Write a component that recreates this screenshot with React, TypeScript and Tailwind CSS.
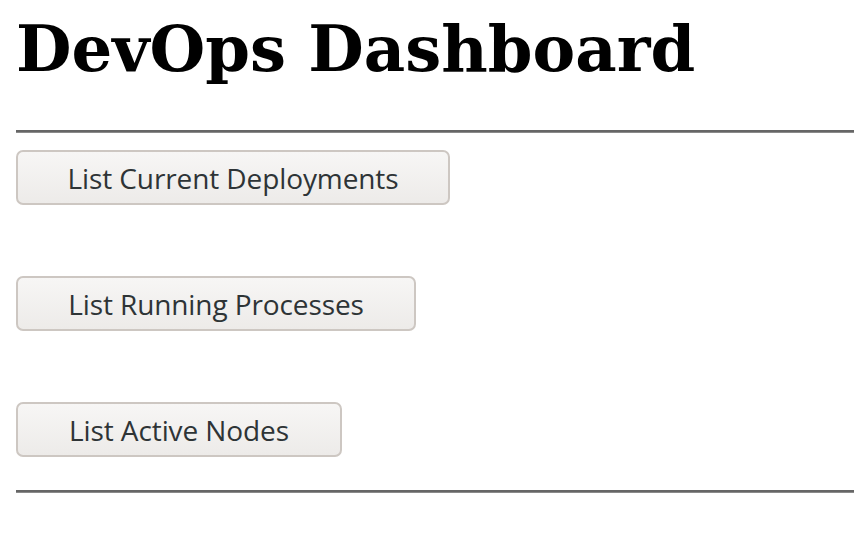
export default function App() {
  const actions = [
    { label: "List Current Deployments", width: "w-[434px]" },
    { label: "List Running Processes", width: "w-[400px]" },
    { label: "List Active Nodes", width: "w-[326px]" },
  ];

  return (
    <main className="min-h-screen bg-white pl-4">
      {/* title */}
      <h1 className="pt-[11px] font-['DejaVu_Serif',serif] text-[64px] font-bold leading-[75px] text-black">
        DevOps Dashboard
      </h1>

      <hr className="mt-[44px] h-[3px] border-0 border-t-2 border-b border-t-[#666666] border-b-[#8a8a8a]" />

      {/* actions */}
      <div className="flex flex-col items-start gap-[71px] pt-[17px]">
        {actions.map((a) => (
          <button
            key={a.label}
            type="button"
            className={`${a.width} h-[55px] rounded-[7px] border-2 border-[#cdc7c2] bg-gradient-to-b from-[#f7f6f5] to-[#edebe9] font-['Open_Sans',sans-serif] text-[28px] tracking-[-0.1px] text-[#2e3436]`}
          >
            {a.label}
          </button>
        ))}
      </div>

      <hr className="mt-[33px] h-[3px] border-0 border-t-2 border-b border-t-[#666666] border-b-[#8a8a8a]" />
    </main>
  );
}
